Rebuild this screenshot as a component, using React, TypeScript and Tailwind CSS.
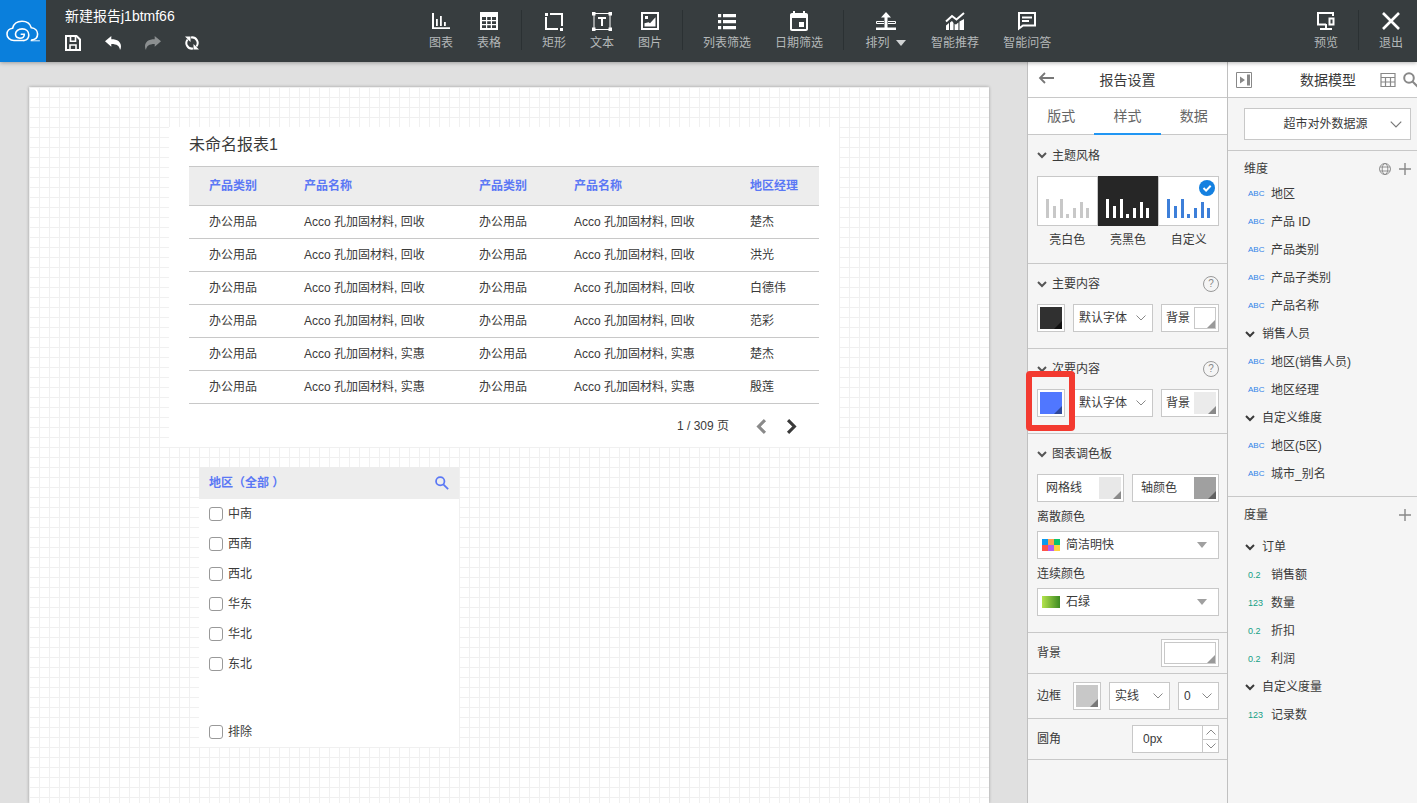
import React, { useState } from 'react';
import clsx from 'clsx';

type IconProps = { className?: string };

const CloudLogo = ({ className }: IconProps) => (
  <svg viewBox="0 0 34 22" className={className} fill="none" stroke="#fff" strokeWidth="1.6" strokeLinecap="round">
    <path d="M18 20.5H8C4 20.500 1 17.800 1 14.200c0-3.300 2.400-5.700 5.600-6C7.600 4 11.300 1.200 16 1.200c4.600 0 8.200 2.600 9.300 6.500 3.700.3 6.300 2.900 6.300 6.400 0 3-2 5.600-6 6" />
    <path d="M25 20.800h8.500" strokeWidth=".9" />
    <path d="M18 20.500c3.200-.6 4.800-2.800 4.800-5.600 0-3.500-2.800-6-6.600-6-3.900 0-6.700 2.300-6.700 5.200 0 2.600 2 4.100 4.500 4.100 2.700 0 4.300-1.300 4.300-4h-3" />
  </svg>
);

const SaveIcon = ({ className }: IconProps) => (
  <svg viewBox="0 0 16 16" className={className} fill="none" stroke="#fff" strokeWidth="2">
    <path d="M1 1h10.500L15 4.500V15H1z" />
    <path d="M5 15v-5h6v5M5.500 1v5.200h5V1" strokeWidth="1.600" />
  </svg>
);

const UndoIcon = ({ className }: IconProps) => (
  <svg viewBox="0 0 16 14" className={className} fill="currentColor">
    <path d="M0 5.200 6.300 0v3.200c6.200 0 9.700 2.600 9.700 7.200 0 1.300-.4 2.600-1 3.600-.5-4-3-6-8.700-6v2.800z" />
  </svg>
);

const RefreshIcon = ({ className }: IconProps) => (
  <svg viewBox="0 0 14 14" className={className} fill="none" stroke="#fff" strokeWidth="2">
    <path d="M8 12.500A5.600 5.600 0 0 1 2.600 3.500M6 1.500a5.600 5.600 0 0 1 5.400 9" />
    <path d="M0 .5h5.500V6zM14 13.500H8.500V8z" fill="#fff" stroke="none" />
  </svg>
);

const ChartIcon = () => (
  <svg viewBox="0 0 20 20" className="size-5" fill="#fff">
    <path d="M1 2h2v14.200h16V18H1zM5 8h1.800v7H5zM9 5h1.800v10H9zM13 11h1.800v4H13z" />
  </svg>
);

const TableIcon = () => (
  <svg viewBox="0 0 20 20" className="size-5" fill="#fff" fillRule="evenodd">
    <path d="M1 1h18v18H1zM3 6v3h4V6zM8.200 6v3h3.600V6zM13 6v3h4V6zM3 10.300v2.600h4v-2.600zM8.200 10.300v2.600h3.600v-2.600zM13 10.300v2.600h4v-2.600zM3 14.200v2.800h4v-2.800zM8.200 14.200v2.800h3.600v-2.800zM13 14.200v2.800h4v-2.800z" />
  </svg>
);

const RectIcon = () => (
  <svg viewBox="0 0 20 20" className="size-5">
    <path d="M6 3h12v12M2 6v12h12" fill="none" stroke="#fff" strokeWidth="2" />
    <path d="M1 2h3v3H1zM16 17h3v3h-3z" fill="#fff" />
  </svg>
);

const TextIcon = () => (
  <svg viewBox="0 0 20 20" className="size-5" fill="#fff">
    <rect x="2" y="2.500" width="16" height="16" fill="none" stroke="#fff" />
    <path d="M0 1h3.500v3.500H0zM16.500 1H20v3.500h-3.500zM0 16.500h3.500V20H0zM16.500 16.500H20V20h-3.500zM6 6h8v2h-3v7H9V8H6z" />
  </svg>
);

const ImageIcon = () => (
  <svg viewBox="0 0 20 20" className="size-5">
    <rect x="2" y="2" width="16" height="16" fill="none" stroke="#fff" strokeWidth="2" />
    <path d="M4.500 15.500v-3.200l4-1 1.500 1 5.500-6v9.200zM5 5h3v3H5z" fill="#fff" />
  </svg>
);

const ListIcon = () => (
  <svg viewBox="0 0 20 20" className="size-5" fill="#fff">
    <path d="M1 3h3.200v3.200H1zM6 3h13v3.200H6zM1 9h3.200v3.200H1zM6 9h13v3.200H6zM1 15h3.200v3.200H1zM6 15h13v3.200H6z" />
  </svg>
);

const CalendarIcon = () => (
  <svg viewBox="2 1 20 20" className="size-5" fill="#fff">
    <path d="M17 12h-5v5h5v-5zM16 1v2H8V1H6v2H5c-1.110 0-1.990.9-1.990 2L3 19c0 1.100.89 2 2 2h14c1.100 0 2-.9 2-2V5c0-1.100-.9-2-2-2h-1V1h-2zm3 18H5V8h14v11z" />
  </svg>
);

const ArrangeIcon = () => (
  <svg viewBox="0 0 20 20" className="size-5" fill="#fff">
    <path d="M0 16.500h20V19H0zM10 1l5 5.500h-3.500V17h-3V6.500H5z" />
    <path d="M8 10.500H.5v2H8M12 10.500h7.500v2H12" fill="none" stroke="#fff" />
  </svg>
);

const InsightIcon = () => (
  <svg viewBox="0 0 20 20" className="size-5" fill="#fff">
    <path d="M1 19v-4.500L4 12v7zM5 19v-7.500l2-1.500 1.500 2V19zM9.600 19v-6l1.400.5 2.400-2V19zM14.500 19v-8.500L19 8v11z" />
    <path d="M1 10.500 7 5l4.500 3.500L19 2" fill="none" stroke="#fff" strokeWidth="2" />
  </svg>
);

const ChatIcon = () => (
  <svg viewBox="0 0 20 20" className="size-5">
    <path d="M2 2h16v12.500H6L2 17.500z" fill="none" stroke="#fff" strokeWidth="2" />
    <path d="M5 6.500h10M5 10h7" stroke="#fff" strokeWidth="1.800" />
  </svg>
);

const PreviewIcon = () => (
  <svg viewBox="0 0 20 20" className="size-5" fill="none" stroke="#fff" strokeWidth="2">
    <path d="M17 5V2H2v11.500h8M10 13v5M4 18h12" />
    <path d="M13.500 7.500h4v6h-4z" />
  </svg>
);

const ExitIcon = () => (
  <svg viewBox="0 0 20 20" className="size-5" stroke="#fff" strokeWidth="2.600">
    <path d="M2 2l16 16M18 2 2 18" />
  </svg>
);

const Chevron = ({ className }: IconProps) => (
  <svg viewBox="0 0 10 6" className={className} fill="none" stroke="currentColor">
    <path d="m.5.5 4.500 4.500L9.500.5" />
  </svg>
);

const BoldChevron = ({ className }: IconProps) => (
  <svg viewBox="0 0 10 7" className={className} fill="none" stroke="currentColor" strokeWidth="2">
    <path d="m1 1 4 4 4-4" />
  </svg>
);

const Caret = ({ className }: IconProps) => (
  <svg viewBox="0 0 10 6" className={className} fill="currentColor">
    <path d="M0 0h10L5 6z" />
  </svg>
);

const SearchIcon = ({ className }: IconProps) => (
  <svg viewBox="0 0 16 16" className={className} fill="none" stroke="currentColor" strokeWidth="2">
    <circle cx="6" cy="6" r="4.800" />
    <path d="m9.500 9.500 5.500 5.500" />
  </svg>
);

const PlusIcon = ({ className }: IconProps) => (
  <svg viewBox="0 0 12 12" className={className} stroke="currentColor" strokeWidth="1.400">
    <path d="M6 0v12M0 6h12" />
  </svg>
);

const ToolButton = ({ label, icon, caret }: { label: string; icon: React.ReactNode; caret?: boolean }) => (
  <button
    type="button"
    className={clsx('flex shrink-0 flex-col items-center gap-1 pt-[11px] text-xs leading-4 text-[#b4b8b9]', caret ? 'w-[67px]' : 'px-3')}
  >
    {icon}
    <span className="flex items-center gap-1.5 whitespace-nowrap">
      {label}
      {caret && <Caret className="h-1.5 w-2.5 text-[#d0d3d4]" />}
    </span>
  </button>
);

const Divider = () => <div className="mx-2 mt-2.5 h-10 w-px shrink-0 bg-[#2b3133]" />;

const TopBar = () => (
  <header className="relative z-10 flex h-[62px] shrink-0 bg-[#373d3f] shadow-[0_1px_4px_rgba(0,0,0,0.3)]">
    <div className="flex w-[417px] shrink-0">
      <a href="#home" aria-label="首页" className="flex w-[46px] items-center justify-center bg-[#0a7fdc]">
        <CloudLogo className="h-[22px] w-[34px]" />
      </a>
      <div className="pt-2 pl-[19px]">
        <h1 className="text-sm leading-4 text-white">新建报告j1btmf66</h1>
        <div className="flex h-[38px] items-center gap-6">
          <button type="button" aria-label="保存"><SaveIcon className="size-4" /></button>
          <button type="button" aria-label="撤销" className="text-white"><UndoIcon className="h-[14px] w-4" /></button>
          <button type="button" aria-label="重做" className="text-[#8b8f90]"><UndoIcon className="h-[14px] w-4 -scale-x-100" /></button>
          <button type="button" aria-label="刷新"><RefreshIcon className="size-[14px]" /></button>
        </div>
      </div>
    </div>
    <nav className="flex flex-1">
      <ToolButton label="图表" icon={<ChartIcon />} />
      <ToolButton label="表格" icon={<TableIcon />} />
      <Divider />
      <ToolButton label="矩形" icon={<RectIcon />} />
      <ToolButton label="文本" icon={<TextIcon />} />
      <ToolButton label="图片" icon={<ImageIcon />} />
      <Divider />
      <ToolButton label="列表筛选" icon={<ListIcon />} />
      <ToolButton label="日期筛选" icon={<CalendarIcon />} />
      <Divider />
      <ToolButton label="排列" icon={<ArrangeIcon />} caret />
      <ToolButton label="智能推荐" icon={<InsightIcon />} />
      <ToolButton label="智能问答" icon={<ChatIcon />} />
    </nav>
    <div className="flex shrink-0 pr-0.5">
      <ToolButton label="预览" icon={<PreviewIcon />} />
      <Divider />
      <ToolButton label="退出" icon={<ExitIcon />} />
    </div>
  </header>
);

const columns = ['产品类别', '产品名称', '产品类别', '产品名称', '地区经理'];

const rows = [
  ['Acco 孔加固材料, 回收', '楚杰'],
  ['Acco 孔加固材料, 回收', '洪光'],
  ['Acco 孔加固材料, 回收', '白德伟'],
  ['Acco 孔加固材料, 回收', '范彩'],
  ['Acco 孔加固材料, 实惠', '楚杰'],
  ['Acco 孔加固材料, 实惠', '殷莲'],
];

const ReportTable = () => (
  <section className="absolute top-10 left-[140px] h-80 w-[670px] bg-white px-5">
    <h2 className="pt-1.5 pb-[9px] text-base leading-6">未命名报表1</h2>
    <table className="w-full table-fixed border-collapse text-left text-xs">
      <colgroup>
        <col className="w-[95px]" />
        <col className="w-[175px]" />
        <col className="w-[95px]" />
        <col className="w-[176px]" />
        <col />
      </colgroup>
      <thead>
        <tr className="h-[39px] border-y border-[#c8c8c8] bg-[#ededed] text-[#5b78f5]">
          {columns.map((name, i) => (
            <th key={i} className="pl-5 font-bold">{name}</th>
          ))}
        </tr>
      </thead>
      <tbody>
        {rows.map(([product, manager], i) => (
          <tr key={i} className="h-[33px] border-b border-[#c8c8c8]">
            <td className="pl-5">办公用品</td>
            <td className="pl-5">{product}</td>
            <td className="pl-5">办公用品</td>
            <td className="pl-5">{product}</td>
            <td className="pl-5">{manager}</td>
          </tr>
        ))}
      </tbody>
    </table>
    <div className="flex h-[44px] items-center justify-end pr-[19px] text-xs">
      <span className="mr-6">1 / 309 页</span>
      <button type="button" aria-label="上一页" className="mr-[15px] flex size-4 items-center justify-center text-[#8a8a8a]">
        <BoldChevron className="h-[11px] w-4 shrink-0 rotate-90" />
      </button>
      <button type="button" aria-label="下一页" className="flex size-4 items-center justify-center">
        <BoldChevron className="h-[11px] w-4 shrink-0 -rotate-90" />
      </button>
    </div>
  </section>
);

const CheckRow = ({ label }: { label: string }) => (
  <label className="flex h-[30px] items-center gap-[5px] px-2.5">
    <input type="checkbox" className="size-3.5 appearance-none rounded-[3px] border border-[#999] bg-white checked:bg-[#5272f2]" />
    {label}
  </label>
);

const RegionFilter = () => (
  <section className="absolute top-[380px] left-[170px] flex h-[280px] w-[260px] flex-col bg-white text-xs">
    <div className="flex h-8 items-center justify-between bg-[#ededed] px-2.5 text-[#5b78f5]">
      <h2 className="font-bold">地区（全部 ）</h2>
      <button type="button" aria-label="搜索"><SearchIcon className="size-[14px]" /></button>
    </div>
    {['中南', '西南', '西北', '华东', '华北', '东北'].map((region) => (
      <CheckRow key={region} label={region} />
    ))}
    <div className="mt-auto">
      <CheckRow label="排除" />
    </div>
  </section>
);

const Canvas = () => (
  <main className="flex min-w-0 flex-1 bg-[#e0e0e0] pt-[25px] pr-[38px] pl-[29px]">
    <div className="relative min-h-[700px] flex-1 bg-white bg-[linear-gradient(to_right,#f0f0f0_1px,transparent_1px),linear-gradient(to_bottom,#f0f0f0_1px,transparent_1px)] bg-[size:10px_10px] shadow-[0_0_3px_rgba(0,0,0,0.3)]">
      <ReportTable />
      <RegionFilter />
    </div>
  </main>
);

const Corner = ({ className }: IconProps) => (
  <svg viewBox="0 0 8 8" className={clsx('absolute right-0 bottom-0 size-2', className)} fill="currentColor">
    <path d="M8 0v8H0z" />
  </svg>
);

const Swatch = ({ label, color, corner }: { label: string; color: string; corner: string }) => (
  <button type="button" aria-label={label} className="size-7 shrink-0 border border-[#c8c8c8] bg-white p-0.5">
    <span className={clsx('relative block size-full', color)}>
      <Corner className={corner} />
    </span>
  </button>
);

const LabelledSwatch = ({ label, color, corner, className }: { label: string; color: string; corner: string; className: string }) => (
  <button type="button" className={clsx('flex h-7 items-center justify-between border border-[#c8c8c8] bg-white pr-0.5', className)}>
    {label}
    <span className={clsx('relative block size-[22px]', color)}>
      <Corner className={corner} />
    </span>
  </button>
);

const Dropdown = ({ label, value, className }: { label: string; value: string; className: string }) => (
  <div className={clsx('relative', className)}>
    <select aria-label={label} className="h-7 w-full appearance-none border border-[#c8c8c8] bg-white pl-[5px]">
      <option>{value}</option>
    </select>
    <Chevron className="pointer-events-none absolute top-[11px] right-[7px] h-1.5 w-2.5 text-[#888]" />
  </div>
);

const Section = ({ title, help, children }: { title: string; help?: boolean; children: React.ReactNode }) => (
  <section className="border-b border-[#c8c8c8] pr-2 pb-4 pl-[9px]">
    <div className="flex h-10 items-center gap-[5px]">
      <BoldChevron className="h-[7px] w-2.5 text-[#555]" />
      <h3>{title}</h3>
      {help && (
        <button type="button" aria-label="帮助" className="ml-auto flex size-4 items-center justify-center rounded-full border border-[#999] text-[10px] leading-none text-[#888]">
          ?
        </button>
      )}
    </div>
    {children}
  </section>
);

const MiniBars = ({ className }: IconProps) => (
  <svg viewBox="0 0 43 20" className={className} fill="currentColor">
    <path d="M0 0h3v19H0zM7 7h3v12H7zM14 0h3v19h-3zM20 15h3v4h-3zM27 9h3v10h-3zM34 3h3v16h-3zM40 9h3v10h-3z" />
  </svg>
);

const themes = [
  { name: '亮白色', box: 'border-[#c8c8c8] bg-white text-[#c8c8c8]' },
  { name: '亮黑色', box: 'border-[#262626] bg-[#262626] text-white' },
  { name: '自定义', box: 'border-[#c8c8c8] bg-white text-[#3d7fd9]' },
];

const tabs = ['版式', '样式', '数据'];

const PaletteSelect = ({ id, label, value, icon }: { id: string; label: string; value: string; icon: React.ReactNode }) => (
  <>
    <label htmlFor={id} className="flex h-[29px] items-center">{label}</label>
    <div className="relative">
      <select id={id} className="h-7 w-full appearance-none border border-[#c8c8c8] bg-white pl-7">
        <option>{value}</option>
      </select>
      <svg viewBox="0 0 18 12" className="pointer-events-none absolute top-2 left-[5px] h-3 w-[18px]">{icon}</svg>
      <Caret className="pointer-events-none absolute top-[11px] right-3 h-1.5 w-2.5 text-[#a0a0a0]" />
    </div>
  </>
);

const SettingsPanel = () => {
  const [tab, setTab] = useState('样式');
  const [theme, setTheme] = useState('自定义');

  return (
    <aside className="w-[200px] shrink-0 border-l border-[#c0c0c0] bg-[#f5f5f5] text-xs">
      <div className="relative flex h-9 items-center justify-center border-b border-[#c8c8c8] bg-white">
        <button type="button" aria-label="返回" className="absolute top-2.5 left-2.5">
          <svg viewBox="0 0 16 12" className="h-3 w-4" fill="none" stroke="#777" strokeWidth="1.800">
            <path d="M16 6H2M7 1 2 6l5 5" />
          </svg>
        </button>
        <h2 className="text-sm">报告设置</h2>
      </div>
      <div role="tablist" className="flex h-[37px] border-b border-[#c8c8c8] bg-white text-sm text-[#666]">
        {tabs.map((name) => (
          <button
            key={name}
            type="button"
            role="tab"
            aria-selected={name === tab}
            onClick={() => setTab(name)}
            className={clsx('-mb-px flex-1 border-b-2', name === tab ? 'border-[#2196f3]' : 'border-transparent')}
          >
            {name}
          </button>
        ))}
      </div>

      <section className="border-b border-[#c8c8c8] pr-2 pb-[9px] pl-[9px]">
        <div className="flex h-[41px] items-center gap-[5px]">
          <BoldChevron className="h-[7px] w-2.5 text-[#555]" />
          <h3>主题风格</h3>
        </div>
        <div className="grid grid-cols-3">
          {themes.map(({ name, box }) => (
            <button key={name} type="button" aria-pressed={name === theme} onClick={() => setTheme(name)}>
              <span className={clsx('relative flex h-[50px] items-end justify-center border pb-1.5', box)}>
                <MiniBars className="h-5 w-[43px]" />
                {name === theme && (
                  <svg viewBox="0 0 16 16" className="absolute top-[3px] right-[3px] size-4">
                    <circle cx="8" cy="8" r="8" fill="#1480e0" />
                    <path d="m4.500 8 2.600 2.600 4.600-4.800" fill="none" stroke="#fff" strokeWidth="2" />
                  </svg>
                )}
              </span>
              <span className="block leading-7">{name}</span>
            </button>
          ))}
        </div>
      </section>

      <Section title="主要内容" help>
        <div className="flex gap-2">
          <Swatch label="主要颜色" color="bg-[#303030]" corner="text-[#111]" />
          <Dropdown label="主要字体" value="默认字体" className="flex-1" />
          <LabelledSwatch label="背景" color="border border-[#c8c8c8] bg-white" corner="text-[#999]" className="w-[58px] pl-1" />
        </div>
      </Section>

      <Section title="次要内容" help>
        <div className="flex gap-2">
          <div className="relative flex">
            <Swatch label="次要颜色" color="bg-[#5077ff]" corner="text-[#2f4899]" />
            <div className="pointer-events-none absolute -top-[18px] -left-[11px] z-10 h-[60px] w-[49px] rounded-sm border-6 border-[#f33a30]" />
          </div>
          <Dropdown label="次要字体" value="默认字体" className="flex-1" />
          <LabelledSwatch label="背景" color="bg-[#ebebeb]" corner="text-[#8a8a8a]" className="w-[58px] pl-1" />
        </div>
      </Section>

      <Section title="图表调色板">
        <div className="flex gap-2">
          <LabelledSwatch label="网格线" color="bg-[#e8e8e8]" corner="text-[#8a8a8a]" className="flex-1 pl-2" />
          <LabelledSwatch label="轴颜色" color="bg-[#a0a0a0]" corner="text-[#606060]" className="flex-1 pl-2" />
        </div>
        <PaletteSelect
          id="discrete"
          label="离散颜色"
          value="简洁明快"
          icon={
            <>
              <path d="M0 0h6v6H0z" fill="#0a9bf0" />
              <path d="M6 0h6v6H6z" fill="#ffa14d" />
              <path d="M12 0h6v6h-6z" fill="#0cc46c" />
              <path d="M0 6h6v6H0z" fill="#ff5449" />
              <path d="M6 6h6v6H6z" fill="#b45bf0" />
              <path d="M12 6h6v6h-6z" fill="#ffd23f" />
            </>
          }
        />
        <PaletteSelect
          id="continuous"
          label="连续颜色"
          value="石绿"
          icon={
            <>
              <linearGradient id="stone-green">
                <stop offset="0" stopColor="#b4e34c" />
                <stop offset="1" stopColor="#3c8a22" />
              </linearGradient>
              <path d="M0 0h18v12H0z" fill="url(#stone-green)" />
            </>
          }
        />
      </Section>

      <div className="flex items-center justify-between border-b border-[#c8c8c8] py-1.5 pr-2 pl-[9px]">
        <span>背景</span>
        <button type="button" aria-label="背景颜色" className="h-7 w-[58px] border border-[#c8c8c8] bg-white p-0.5">
          <span className="relative block size-full border border-[#c8c8c8]">
            <Corner className="text-[#999]" />
          </span>
        </button>
      </div>

      <div className="flex items-center gap-2 border-b border-[#c8c8c8] py-2 pr-2 pl-[9px]">
        <span className="w-7">边框</span>
        <Swatch label="边框颜色" color="bg-[#c8c8c8]" corner="text-[#777]" />
        <Dropdown label="边框样式" value="实线" className="w-[61px]" />
        <Dropdown label="边框宽度" value="0" className="w-[41px]" />
      </div>

      <div className="flex items-center justify-between border-b border-[#c8c8c8] py-1.5 pr-2 pl-[9px]">
        <label htmlFor="radius">圆角</label>
        <div className="flex h-7 w-[87px] border border-[#c8c8c8] bg-white">
          <input id="radius" defaultValue="0px" className="w-0 flex-1 pl-2.5 outline-none" />
          <div className="flex w-4 flex-col divide-y divide-[#c8c8c8] border-l border-[#c8c8c8] text-[#888]">
            <button type="button" aria-label="增加" className="flex flex-1 items-center justify-center">
              <Chevron className="h-1.5 w-2.5 rotate-180" />
            </button>
            <button type="button" aria-label="减少" className="flex flex-1 items-center justify-center">
              <Chevron className="h-1.5 w-2.5" />
            </button>
          </div>
        </div>
      </div>
    </aside>
  );
};

type Field = { name: string; type?: 'ABC' | '0.2' | '123' };

const dimensions: Field[] = [
  { name: '地区', type: 'ABC' },
  { name: '产品 ID', type: 'ABC' },
  { name: '产品类别', type: 'ABC' },
  { name: '产品子类别', type: 'ABC' },
  { name: '产品名称', type: 'ABC' },
  { name: '销售人员' },
  { name: '地区(销售人员)', type: 'ABC' },
  { name: '地区经理', type: 'ABC' },
  { name: '自定义维度' },
  { name: '地区(5区)', type: 'ABC' },
  { name: '城市_别名', type: 'ABC' },
];

const measures: Field[] = [
  { name: '订单' },
  { name: '销售额', type: '0.2' },
  { name: '数量', type: '123' },
  { name: '折扣', type: '0.2' },
  { name: '利润', type: '0.2' },
  { name: '自定义度量' },
  { name: '记录数', type: '123' },
];

const FieldList = ({ fields }: { fields: Field[] }) => (
  <ul>
    {fields.map(({ name, type }) => (
      <li key={name} className="flex h-7 items-center">
        {type ? (
          <span className={clsx('w-[43px] pl-5', type === 'ABC' ? 'text-[8px] text-[#2f83e8]' : 'text-[9px] text-[#16a085]')}>
            {type}
          </span>
        ) : (
          <span className="w-[34px] pl-[17px]">
            <BoldChevron className="h-[7px] w-2.5" />
          </span>
        )}
        {name}
      </li>
    ))}
  </ul>
);

const DataPanel = () => (
  <aside className="w-[190px] shrink-0 border-l border-[#c0c0c0] bg-[#f5f5f5] text-xs">
    <div className="flex h-9 items-center overflow-hidden border-b border-[#c8c8c8] bg-white pl-2 text-[#888]">
      <button type="button" aria-label="收起" className="shrink-0">
        <svg viewBox="0 0 16 16" className="size-4" fill="currentColor">
          <path d="M.5.500h15v15H.5z" fill="none" stroke="currentColor" />
          <path d="M4 4.500v7L9 8zM11 2.500h3v11h-3z" />
        </svg>
      </button>
      <h2 className="ml-12 shrink-0 text-sm text-[#3a3a3a]">数据模型</h2>
      <button type="button" aria-label="表格视图" className="ml-6 shrink-0">
        <svg viewBox="0 0 16 16" className="size-4" fill="none" stroke="currentColor" strokeWidth="1.200">
          <path d="M1 1.500h14v13H1zM1 5.500h14M1 10h14M5.500 5.500v9M10.500 5.500v9" />
        </svg>
      </button>
      <button type="button" aria-label="搜索" className="ml-[7px] shrink-0"><SearchIcon className="size-4" /></button>
    </div>

    <div className="border-b border-[#c8c8c8] py-2.5 pr-1.5 pl-4">
      <div className="relative">
        <select aria-label="数据源" className="h-8 w-full appearance-none border border-[#c8c8c8] bg-white pr-1 text-center">
          <option>超市对外数据源</option>
        </select>
        <Chevron className="pointer-events-none absolute top-[13px] right-[9px] h-[7px] w-3 text-[#777]" />
      </div>
    </div>

    <section className="border-b border-[#c8c8c8] pb-2">
      <div className="flex items-center pt-2 pr-1.5 pl-4 text-[#888]">
        <h3 className="leading-[21px] text-[#3a3a3a]">维度</h3>
        <button type="button" aria-label="地理角色" className="ml-auto pb-0.5">
          <svg viewBox="0 0 12 12" className="size-3" fill="none" stroke="currentColor" strokeWidth=".9">
            <circle cx="6" cy="6" r="5.500" />
            <ellipse cx="6" cy="6" rx="2.800" ry="5.500" />
            <path d="M1 4h10M1 8h10" />
          </svg>
        </button>
        <button type="button" aria-label="新建维度" className="ml-2 pb-0.5"><PlusIcon className="size-3" /></button>
      </div>
      <FieldList fields={dimensions} />
    </section>

    <section>
      <div className="flex items-center justify-between pt-2 pr-1.5 pb-[7px] pl-4 text-[#888]">
        <h3 className="leading-[21px] text-[#3a3a3a]">度量</h3>
        <button type="button" aria-label="新建度量" className="pb-0.5"><PlusIcon className="size-3" /></button>
      </div>
      <FieldList fields={measures} />
    </section>
  </aside>
);

export default function App() {
  return (
    <div className="flex min-h-screen flex-col font-['Liberation_Sans','Noto_Sans_CJK_SC',sans-serif] text-[#3a3a3a]">
      <TopBar />
      <div className="flex flex-1">
        <Canvas />
        <SettingsPanel />
        <DataPanel />
      </div>
    </div>
  );
}
